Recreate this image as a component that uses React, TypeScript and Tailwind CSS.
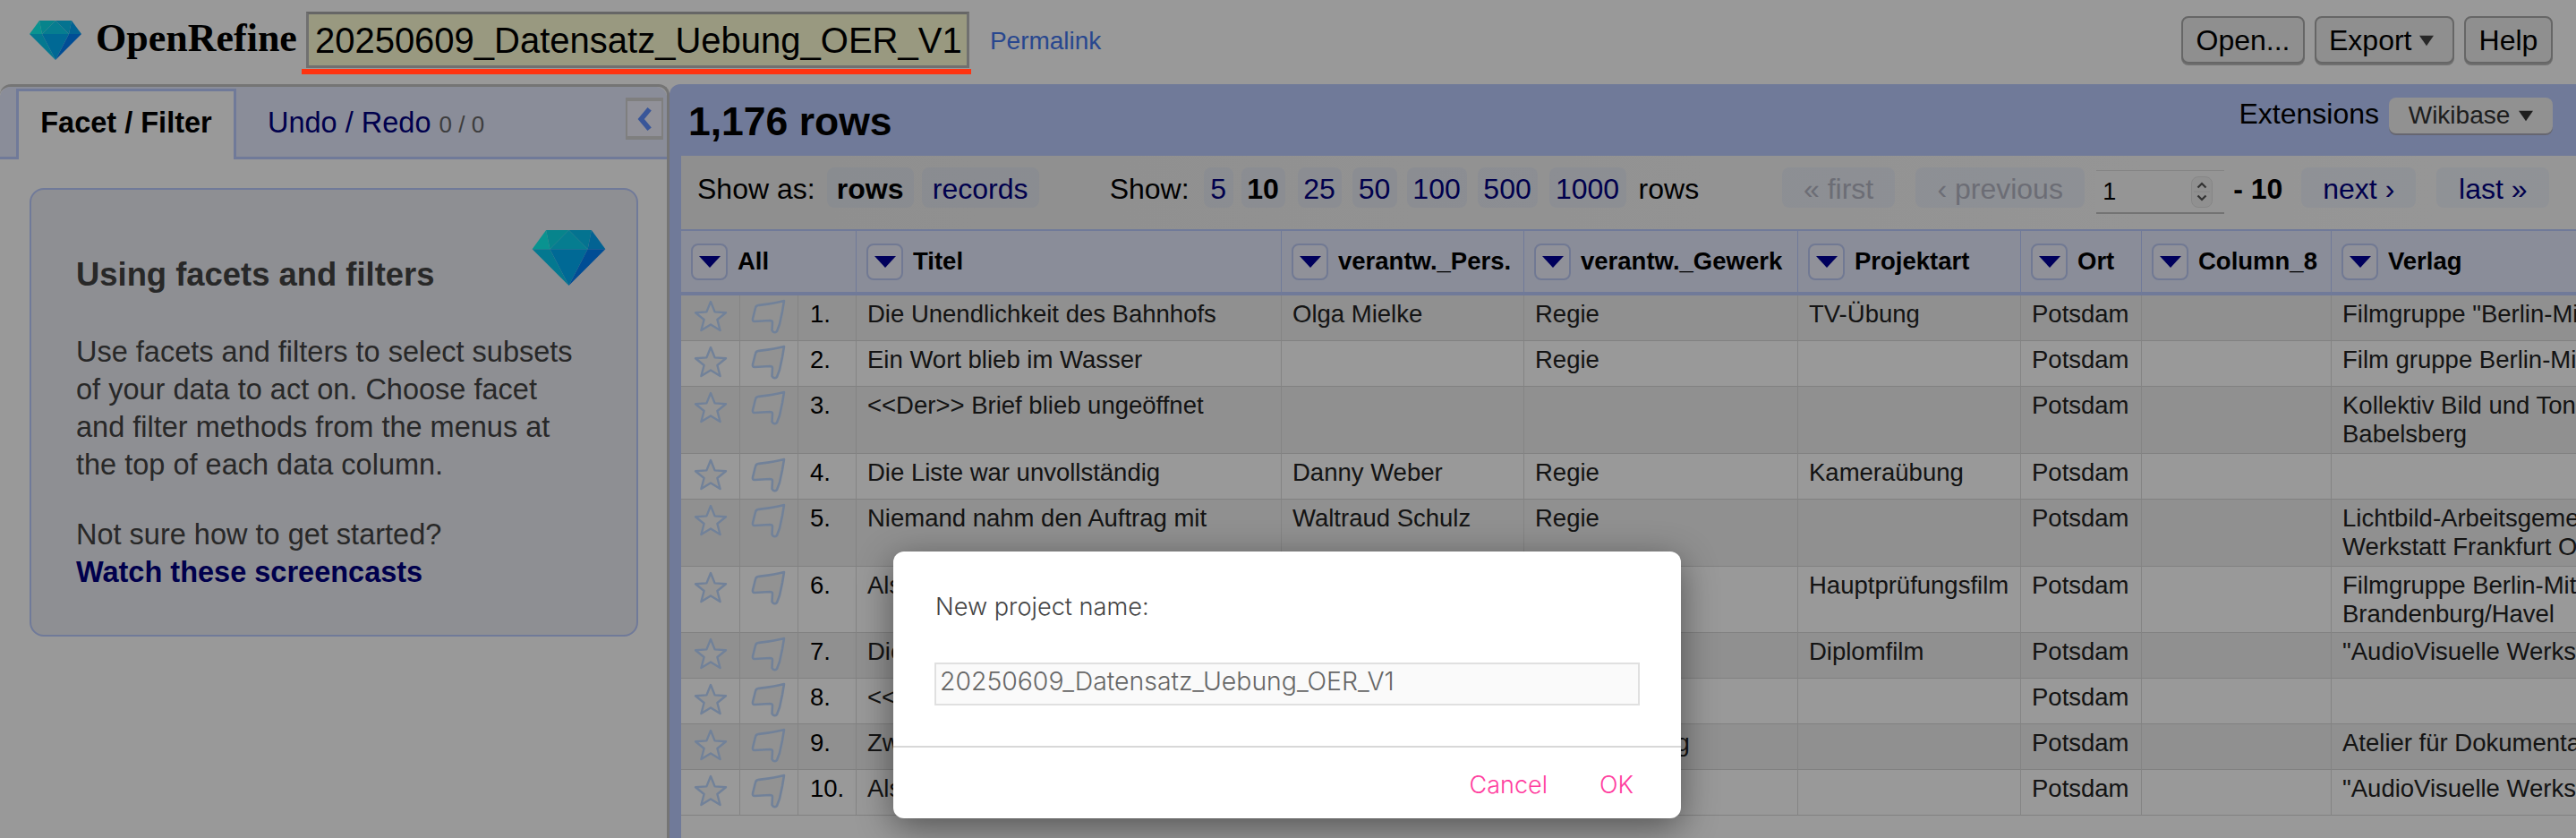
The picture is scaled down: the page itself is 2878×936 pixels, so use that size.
const Diamond = ({ className }: { className: string }) => (
  <svg viewBox="0 0 58 44" className={className}>
    <polygon points="11,0 0,15 14,15" fill="#10f5f0" />
    <polygon points="11,0 29,0 14,15" fill="#0cdcea" />
    <polygon points="29,0 14,15 44,15" fill="#0ad0f0" />
    <polygon points="29,0 47,0 44,15" fill="#08c0f0" />
    <polygon points="47,0 58,15 44,15" fill="#05a5f5" />
    <polygon points="0,15 14,15 29,44" fill="#08c8f0" />
    <polygon points="14,15 44,15 29,44" fill="#00b0f8" />
    <polygon points="44,15 58,15 29,44" fill="#0080f8" />
  </svg>
);

const Star = () => (
  <svg viewBox="0 0 38 36" className="w-[38px] h-[36px]">
    <path d="M19 2 L23.6 13.4 L36 14.2 L26.4 22 L29.6 34 L19 27.4 L8.4 34 L11.6 22 L2 14.2 L14.4 13.4 Z" fill="#f7f7f7" stroke="#bcd8ff" strokeWidth="2.4" strokeLinejoin="round" />
  </svg>
);

const Flag = () => (
  <svg viewBox="0 0 40 40" className="w-[40px] h-[40px]">
    <path d="M8 7 C16 6 26 5 37 2 L35 14 L32 28 L29 36 Q26 39 23.500 35 L24 26 Q24 24 21 24 L4 25 Q1.500 25 2 22 L5 10 Q5.500 7.500 8 7 Z" fill="#f4f4f4" stroke="#bcd8ff" strokeWidth="2.600" strokeLinejoin="round" />
  </svg>
);

const Drop = () => (
  <span className="inline-flex shrink-0 items-center justify-center w-[41px] h-[41px] rounded-lg border-2 border-[#bccaf5] bg-[#f0f2ff]">
    <svg viewBox="0 0 24 13" className="w-[24px] h-[13px]"><polygon points="0,0 24,0 12,13" fill="#000099" /></svg>
  </span>
);

const columns = [
  { label: "All", colSpan: 3 },
  { label: "Titel", colSpan: 1 },
  { label: "verantw._Pers.", colSpan: 1 },
  { label: "verantw._Gewerk", colSpan: 1 },
  { label: "Projektart", colSpan: 1 },
  { label: "Ort", colSpan: 1 },
  { label: "Column_8", colSpan: 1 },
  { label: "Verlag", colSpan: 1 },
];

const rows: { t: string; p?: string; g?: string; a?: string; v?: string[] }[] = [
  { t: "Die Unendlichkeit des Bahnhofs", p: "Olga Mielke", g: "Regie", a: "TV-Übung", v: ['Filmgruppe "Berlin-Mitte"'] },
  { t: "Ein Wort blieb im Wasser", g: "Regie", v: ["Film gruppe Berlin-Mitte"] },
  { t: "<<Der>> Brief blieb ungeöffnet", v: ["Kollektiv Bild und Ton", "Babelsberg"] },
  { t: "Die Liste war unvollständig", p: "Danny Weber", g: "Regie", a: "Kameraübung" },
  { t: "Niemand nahm den Auftrag mit", p: "Waltraud Schulz", g: "Regie", v: ["Lichtbild-Arbeitsgemeinschaft", "Werkstatt Frankfurt Oder"] },
  { t: "Als", a: "Hauptprüfungsfilm", v: ["Filmgruppe Berlin-Mitte", "Brandenburg/Havel"] },
  { t: "Die", a: "Diplomfilm", v: ['"AudioVisuelle Werkstatt"'] },
  { t: "<<" },
  { t: "Zw", g: "Bildgestaltung", v: ["Atelier für Dokumentarfilm"] },
  { t: "Als", v: ['"AudioVisuelle Werkstatt"'] },
];

const cell = "align-top pl-[12px] pr-[4px] pt-[5px] pb-[4px] h-[51px] border-b border-r border-b-[#d8d8d8] border-r-[#dcdcdc] whitespace-nowrap overflow-hidden";
const chip = "h-[45px] flex items-center justify-center rounded-lg bg-[#8ab0ff]/10 text-[#000080]";
const chipOff = "h-[45px] flex items-center justify-center rounded-lg bg-[#8ab0ff]/10 text-[#b4b6c4]";

export default function App() {
  return (
    <div className="relative w-[2878px] h-[936px] overflow-hidden bg-white text-black font-['Liberation_Sans',Arial,sans-serif]">
      <header className="h-[94px] flex items-start">
        <Diamond className="ml-[33px] mt-[23px] w-[58px] h-[44px]" />
        <span className="ml-[16px] mt-[18px] text-[44px] leading-[50px] font-bold font-['Liberation_Serif',serif]">OpenRefine</span>
        <div className="ml-[10px] mt-[13px] w-[741px] h-[63px] border-[3px] border-[#bbb] border-t-[#aaa] bg-[#ffffd5] flex items-center pl-[7px] text-[40px] leading-[46px] text-black">20250609_Datensatz_Uebung_OER_V1</div>
        <a className="ml-[23px] mt-[30px] text-[28px] leading-[32px] text-[#4477ee]">Permalink</a>
        <div className="ml-auto mr-[26px] mt-[18px] flex gap-[11px] text-[32px]">
          <button className="w-[138px] h-[53px] rounded-lg border-2 border-[#aaa] bg-[#eee] shadow-[0_2px_0_#bbb]">Open...</button>
          <button className="w-[156px] h-[53px] rounded-lg border-2 border-[#aaa] bg-[#eee] shadow-[0_2px_0_#bbb] flex items-center justify-start pl-[14px] gap-[9px]">Export
            <svg viewBox="0 0 18 22" className="w-[16px] h-[20px]"><polygon points="0,5 18,5 9,18" fill="#444" /></svg>
          </button>
          <button className="w-[99px] h-[53px] rounded-lg border-2 border-[#aaa] bg-[#eee] shadow-[0_2px_0_#bbb]">Help</button>
        </div>
      </header>

      <main className="h-[842px] flex">
        <aside className="w-[748px] shrink-0">
          <div className="h-[842px] rounded-t-xl border-t-[3px] border-r-[3px] border-[#c4c4c4]">
            <div className="h-[81px] rounded-t-xl border-b-[3px] border-b-[#bbcbff] bg-[#e6ebff] flex items-start">
              <div className="ml-[18px] mt-[2px] w-[246px] h-[79px] border-[3px] border-b-0 border-[#bbcbff] bg-white flex items-start justify-center pt-[16px] text-[32.500px] leading-[38px] font-bold">Facet / Filter</div>
              <div className="ml-[35px] mt-[21px] text-[32.500px] leading-[38px] text-[#000080]">Undo / Redo <span className="text-[26px] text-[#666]">0 / 0</span></div>
              <div className="ml-auto mr-[4px] mt-[12px] w-[42px] h-[47px] bg-[#f2f2ff] border-x-2 border-y-4 border-[#d4d4d4] flex items-center justify-center">
                <svg viewBox="0 0 20 32" className="w-[20px] h-[30px]"><path d="M16 4 L6 16 L16 28" fill="none" stroke="#5f8fff" strokeWidth="6" /></svg>
              </div>
            </div>
            <div className="relative ml-[33px] mt-[32px] w-[680px] h-[501px] rounded-2xl border-2 border-[#bbcbff] bg-[#edeef5] pl-[50px] pr-[66px] pt-[73px] text-[#444]">
              <Diamond className="absolute left-[558px] top-[45px] w-[85px] h-[62px]" />
              <h2 className="text-[36.400px] leading-[44px] font-bold">Using facets and filters</h2>
              <p className="mt-[43px] text-[32.500px] leading-[42px]">Use facets and filters to select subsets of your data to act on. Choose facet and filter methods from the menus at the top of each data column.</p>
              <p className="mt-[36px] text-[32.500px] leading-[42px]">Not sure how to get started?<br /><a className="font-bold text-[#000080]">Watch these screencasts</a></p>
            </div>
          </div>
        </aside>

        <section className="flex-1 min-w-0 bg-[#bbcbff] rounded-tl-xl pl-[13px] flex flex-col">
          <div className="h-[80px] shrink-0 flex items-start">
            <div className="mt-[17px] ml-[8px] text-[44.500px] leading-[50px] font-bold">1,176 rows</div>
            <div className="ml-auto mr-[26px] mt-[15px] flex items-start">
              <span className="text-[32px] leading-[36px]">Extensions</span>
              <button className="ml-[11px] w-[183px] h-[40px] rounded-lg bg-[#f2f2f2] shadow-[0_2px_0_#aab] flex items-center justify-center gap-[10px] text-[28px] text-[#333]">Wikibase
                <svg viewBox="0 0 18 22" className="w-[16px] h-[20px]"><polygon points="0,5 18,5 9,18" fill="#333" /></svg>
              </button>
            </div>
          </div>
          <div className="flex-1 min-h-0 bg-white overflow-hidden">
            <div className="h-[84px] border-b-2 border-[#bbcbff] bg-linear-to-r from-[#eeeeee] to-[#fbfbfb] flex items-start pt-[13px] text-[32px] leading-[45px]">
              <span className="ml-[18px] mt-[2px]">Show as:</span>
              <span className={chip + " ml-[13px] w-[97px] font-bold !text-black pt-[3px]"}>rows</span>
              <a className={chip + " ml-[9px] w-[131px] pt-[3px]"}>records</a>
              <span className="ml-[79px] mt-[2px]">Show:</span>
              <a className={chip + " ml-[16px] w-[33px] pt-[3px]"}>5</a>
              <span className={chip + " ml-[9px] w-[49px] font-bold !text-black pt-[3px]"}>10</span>
              <a className={chip + " ml-[14px] w-[49px] pt-[3px]"}>25</a>
              <a className={chip + " ml-[12px] w-[50px] pt-[3px]"}>50</a>
              <a className={chip + " ml-[11px] w-[67px] pt-[3px]"}>100</a>
              <a className={chip + " ml-[12px] w-[67px] pt-[3px]"}>500</a>
              <a className={chip + " ml-[13px] w-[86px] pt-[3px]"}>1000</a>
              <span className="ml-[14px] mt-[2px]">rows</span>
              <span className={chipOff + " ml-[93px] w-[126px] pt-[3px]"}>« first</span>
              <span className={chipOff + " ml-[23px] w-[189px] pt-[3px]"}>‹ previous</span>
              <div className="ml-[13px] mt-[3px] w-[143px] h-[49px] bg-[#f8f8f8] border-t border-b-2 border-t-[#dcdcdc] border-b-[#c0c0c0] flex items-center justify-between pl-[7px] pr-[13px] text-[27px]">
                <span>1</span>
                <span className="w-[24px] h-[35px] rounded-lg bg-[#f0f0f0] border border-[#e0e0e0] flex items-center justify-center">
                  <svg viewBox="0 0 20 30" className="w-[18px] h-[28px]"><path d="M5 10 L10 5 L15 10 M5 20 L10 25 L15 20" fill="none" stroke="#555" strokeWidth="2.500" /><path d="M0 15 H20" stroke="#ddd" strokeWidth="1" /></svg>
                </span>
              </div>
              <span className="ml-[10px] mt-[2px] font-bold">- 10</span>
              <a className={chip + " ml-[21px] w-[128px] pt-[3px]"}>next ›</a>
              <a className={chip + " ml-[23px] w-[126px] pt-[3px]"}>last »</a>
            </div>
            <table className="table-fixed w-[2244px] border-separate border-spacing-0 text-[27.500px] leading-[32.400px]">
              <colgroup>
                <col className="w-[66px]" />
                <col className="w-[65px]" />
                <col className="w-[65px]" />
                <col className="w-[475px]" />
                <col className="w-[271px]" />
                <col className="w-[306px]" />
                <col className="w-[249px]" />
                <col className="w-[135px]" />
                <col className="w-[212px]" />
                <col className="w-[400px]" />
              </colgroup>
              <thead>
                <tr>
                  {columns.map((c) => (
                    <th key={c.label} colSpan={c.colSpan} className="h-[72px] p-0 bg-[#e6ebff] border-r border-r-[#bbcbff] border-b-4 border-b-[#bbcbff] font-bold text-left">
                      <div className="flex items-center pl-[11px] gap-[11px] whitespace-nowrap"><Drop />{c.label}</div>
                    </th>
                  ))}
                </tr>
              </thead>
              <tbody className="text-[#222]">
                {rows.map((r, i) => (
                  <tr key={i} className={i % 2 === 0 ? "bg-[#f1f1f1]" : "bg-white"}>
                    <td className="align-top p-0 pt-[5px] h-[51px] border-b border-r border-b-[#d8d8d8] border-r-[#dcdcdc]"><div className="flex justify-center"><Star /></div></td>
                    <td className="align-top p-0 pt-[4px] h-[51px] border-b border-r border-b-[#d8d8d8] border-r-[#dcdcdc]"><div className="flex justify-center"><Flag /></div></td>
                    <td className={cell + " !pl-[13px] text-black"}>{i + 1}.</td>
                    <td className={cell}>{r.t}</td>
                    <td className={cell}>{r.p}</td>
                    <td className={cell}>{r.g}</td>
                    <td className={cell}>{r.a}</td>
                    <td className={cell}>Potsdam</td>
                    <td className={cell}></td>
                    <td className={cell}>{r.v?.map((l) => <div key={l}>{l}</div>)}</td>
                  </tr>
                ))}
              </tbody>
            </table>
          </div>
        </section>
      </main>

      <div className="absolute inset-0 bg-black/40 flex justify-center items-start pt-[616px] font-['Inter',sans-serif]">
        <div className="w-[880px] h-[298px] ml-[-2px] rounded-xl bg-white shadow-[0_10px_40px_rgba(0,0,0,0.45)] flex flex-col">
          <div className="h-[219px] border-b-2 border-[#d8d8d8] pl-[47px] pr-[46px] pt-[44px]">
            <div className="text-[27.200px] leading-[36px] font-light text-[#444]">New project name:</div>
            <div className="mt-[44px] -ml-[1px] h-[48px] border-2 border-[#e0e0e0] bg-[#fafafa] flex items-center pl-[4px] pb-[6px] text-[28.400px] font-light text-[#666]">20250609_Datensatz_Uebung_OER_V1</div>
          </div>
          <div className="flex-1 flex justify-end items-start pt-[24px] pr-[53px] gap-[58px] text-[27px] leading-[36px] font-light text-[#ff3d9e]">
            <span>Cancel</span>
            <span>OK</span>
          </div>
        </div>
      </div>

      <div className="absolute left-[337px] top-[77px] w-[748px] h-[6px] bg-[#ff3310]"></div>
    </div>
  );
}
